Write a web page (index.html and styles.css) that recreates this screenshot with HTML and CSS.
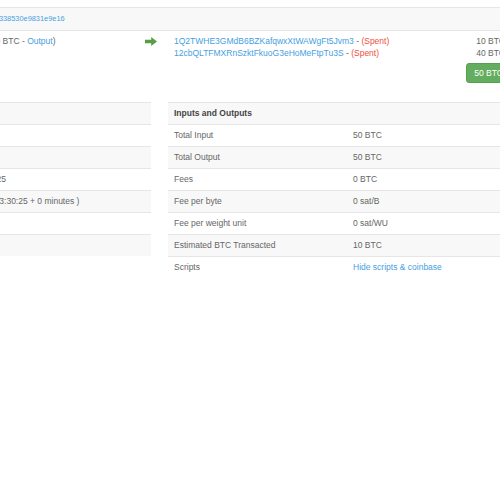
FILE: index.html
```html
<!DOCTYPE html>
<html lang="en">
  <head>
    <meta charset="UTF-8" />
    <meta name="viewport" content="width=device-width, initial-scale=1.0" />
    <title>Bitcoin Transaction</title>
    <link rel="stylesheet" href="styles.css">
  </head>
  <body>
    <div class="page">
      <!-- transaction box -->
      <div class="tx">
        <div class="tx-hash">
          <a href="#" class="hash-link">f4184fc596403b9d638783cf57adfe4c75c605f6356fbc91338530e9831e9e16</a>
        </div>
        <div class="tx-io">
          <div class="tx-in">
            <a href="#">12cbQLTFMXRnSzktFkuoG3eHoMeFtpTu3S</a> (50 BTC - <a href="#">Output</a>)
          </div>
          <div class="tx-arrow">
            <svg width="12" height="9" viewBox="0 0 12 9">
              <path d="M0 2.8H6.2V0L12 4.5L6.2 9V6.2H0Z" fill="#5a9d46" />
            </svg>
          </div>
          <div class="tx-out">
            <div class="out-line">
              <span><a href="#">1Q2TWHE3GMdB6BZKafqwxXtWAWgFt5Jvm3</a> - <span class="spent">(Spent)</span></span>
              <span class="amount">10 BTC</span>
            </div>
            <div class="out-line">
              <span><a href="#">12cbQLTFMXRnSzktFkuoG3eHoMeFtpTu3S</a> - <span class="spent">(Spent)</span></span>
              <span class="amount">40 BTC</span>
            </div>
          </div>
        </div>
        <div class="tx-total">
          <button class="btn-total">50 BTC</button>
        </div>
      </div>

      <!-- summary + inputs/outputs -->
      <div class="details">
        <table class="info summary">
          <colgroup><col class="label-col" /><col /></colgroup>
          <tr><th colspan="2">Summary</th></tr>
          <tr><td>Size</td><td>275 (bytes)</td></tr>
          <tr><td>Weight</td><td>1100</td></tr>
          <tr><td>Received Time</td><td>2009-01-12 03:30:25</td></tr>
          <tr><td>Included In Blocks</td><td><a href="#">170</a> ( 2009-01-12 03:30:25 + 0 minutes )</td></tr>
          <tr><td>Relayed by IP</td><td>Unknown</td></tr>
          <tr><td>Visualize</td><td><a href="#">Tree</a></td></tr>
        </table>

        <table class="info totals">
          <colgroup><col class="label-col" /><col /></colgroup>
          <tr><th colspan="2">Inputs and Outputs</th></tr>
          <tr><td>Total Input</td><td>50 BTC</td></tr>
          <tr><td>Total Output</td><td>50 BTC</td></tr>
          <tr><td>Fees</td><td>0 BTC</td></tr>
          <tr><td>Fee per byte</td><td>0 sat/B</td></tr>
          <tr><td>Fee per weight unit</td><td>0 sat/WU</td></tr>
          <tr><td>Estimated BTC Transacted</td><td>10 BTC</td></tr>
          <tr><td>Scripts</td><td><a href="#">Hide scripts &amp; coinbase</a></td></tr>
        </table>
      </div>
    </div>
  </body>
</html>
```

FILE: styles.css
```css
* {
  margin: 0;
  padding: 0;
  box-sizing: border-box;
}

html,
body {
  overflow: hidden;
}

body {
  font-family: "Liberation Sans", Arial, sans-serif;
  font-size: 8.5px;
  line-height: 12px;
  color: #666;
  background-color: #fff;
}

a {
  color: #45a0df;
  text-decoration: none;
}

/* page is wider than the window, left part scrolled out */
.page {
  width: 701px;
  margin-left: -190px;
  margin-top: 7px;
}

/* transaction box */
.tx-hash {
  background-color: #f8f8f8;
  border-top: 1px solid #e6e6e6;
  padding: 4px 6px 5px;
  white-space: nowrap;
}

.hash-link {
  font-size: 7.4px;
}

.tx-io {
  display: flex;
  border-top: 1px solid #e6e6e6;
  white-space: nowrap;
}

.tx-in {
  width: 324px;
  padding: 4px 6px 4px;
}

.tx-arrow {
  width: 34px;
  display: flex;
  justify-content: center;
  align-items: flex-start;
  padding-top: 6px;
}

.tx-arrow svg {
  display: block;
}

.tx-out {
  flex: 1;
  padding: 4px 6px 4px;
}

.out-line {
  display: flex;
  justify-content: space-between;
}

.spent {
  color: #ef4f42;
}

.tx-total {
  display: flex;
  justify-content: flex-end;
}

.btn-total {
  font-family: inherit;
  font-size: 8.5px;
  line-height: 12px;
  color: #fff;
  background-color: #63ad5f;
  border: 1px solid #579f53;
  border-radius: 3px;
  padding: 3px 7px;
}

/* two tables side by side */
.details {
  display: grid;
  grid-template-columns: 341px 1fr;
  gap: 17px;
  margin-top: 19px;
  align-items: start;
}

.info {
  width: 100%;
  border-collapse: collapse;
  table-layout: fixed;
}

.info th,
.info td {
  border-top: 1px solid #e6e6e6;
  padding: 4px 6px 5px;
  text-align: left;
  white-space: nowrap;
}

.info th {
  color: #444;
  font-weight: bold;
}

.info tr:nth-child(odd) th,
.info tr:nth-child(odd) td {
  background-color: #f8f8f8;
}

.summary .label-col {
  width: 111px;
}

.totals .label-col {
  width: 179px;
}
```
